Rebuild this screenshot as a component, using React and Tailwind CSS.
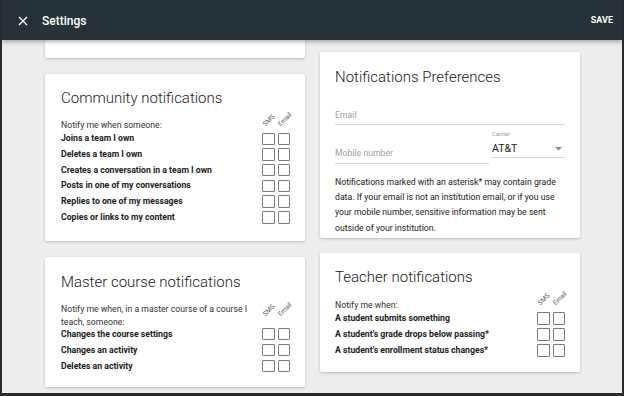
import React from "react";

function Box() {
  return <div className="w-[12.5px] h-[12.5px] border-[1.5px] border-[#7a7a7a] rounded-[1px] bg-white" />;
}

function Labels({ pb }) {
  return (
    <div className={`w-[28px] shrink-0 flex gap-[3px] self-stretch items-end ${pb}`}>
      <div className="w-[12.5px] h-0 relative">
        <span className="absolute left-[4.5px] bottom-0 origin-bottom-left -rotate-45 text-[6.5px] leading-[7px] whitespace-nowrap text-[#555]">SMS</span>
      </div>
      <div className="w-[12.5px] h-0 relative">
        <span className="absolute left-[4.5px] bottom-0 origin-bottom-left -rotate-45 text-[6.5px] leading-[7px] whitespace-nowrap text-[#555]">Email</span>
      </div>
    </div>
  );
}

function Row({ text, h = "h-[15.7px]" }) {
  return (
    <div className={`flex items-center justify-between ${h}`}>
      <span className="text-[8.7px] font-bold text-[#212121] whitespace-nowrap">{text}</span>
      <div className="w-[28px] flex gap-[3px]">
        <Box />
        <Box />
      </div>
    </div>
  );
}

function Card({ children, className = "" }) {
  return (
    <div className={`bg-white rounded-[2px] shadow-[0_1px_3px_rgba(0,0,0,0.22)] ${className}`}>{children}</div>
  );
}

export default function App() {
  return (
    <div className="w-[624px] h-[396px] bg-[#2b2b2b] pt-px pl-[2px] pr-[2px] pb-[3px] font-['Roboto',sans-serif]">
      <div className="w-full h-full bg-[#ededed] flex flex-col overflow-hidden">
        <header className="relative z-10 h-[39px] shrink-0 bg-[#263238] shadow-[0_2px_4px_rgba(0,0,0,0.3)] flex items-center">
          <div className="w-[40px] flex justify-center pl-[2px]">
            <svg width="10" height="10" viewBox="0 0 10 10" className="mt-[1px]">
              <path d="M1 1 L9 9 M9 1 L1 9" stroke="white" strokeWidth="1.3" fill="none" />
            </svg>
          </div>
          <span className="text-white text-[12px] font-medium">Settings</span>
          <span className="ml-auto mr-[9px] text-white text-[9px] font-bold">SAVE</span>
        </header>
        <div className="flex gap-[15px] pl-[43px]">
          <div className="w-[260px] flex flex-col gap-[16px]">
            <Card className="h-[18px]" />
            <Card className="pt-[14px] pl-[16px] pr-[15px] pb-[16px]">
              <h2 className="text-[15px] font-light leading-[20px] text-[#212121]">Community notifications</h2>
              <div className="mt-[11px] flex justify-between h-[12px]">
                <span className="text-[8.7px] leading-[12px] text-[#333]">Notify me when someone:</span>
                <Labels pb="pb-[3px]" />
              </div>
              <Row text="Joins a team I own" />
              <Row text="Deletes a team I own" />
              <Row text="Creates a conversation in a team I own" />
              <Row text="Posts in one of my conversations" />
              <Row text="Replies to one of my messages" />
              <Row text="Copies or links to my content" />
            </Card>
            <Card className="pt-[15px] pl-[16px] pr-[15px] pb-[13px]">
              <h2 className="text-[15px] font-light leading-[20px] text-[#212121]">Master course notifications</h2>
              <div className="mt-[11px] flex justify-between">
                <span className="text-[8.7px] leading-[12.5px] text-[#333]">
                  Notify me when, in a master course of a course I<br />teach, someone:
                </span>
                <Labels pb="pb-[10px]" />
              </div>
              <div className="-mt-[2px]">
                <Row text="Changes the course settings" h="h-[16px]" />
                <Row text="Changes an activity" h="h-[16px]" />
                <Row text="Deletes an activity" h="h-[16px]" />
              </div>
            </Card>
          </div>
          <div className="w-[260px] flex flex-col gap-[15px] pt-[12px]">
            <Card className="pt-[15px] pl-[15px] pr-[15px] pb-[1.6px]">
              <h2 className="text-[15px] font-light leading-[20px] text-[#212121]">Notifications Preferences</h2>
              <div className="mt-[22px] h-[16px] border-b border-[#d6d6d6] text-[8.7px] leading-[12px] text-[#9e9e9e]">Email</div>
              <div className="mt-[5px] flex gap-[3px] items-start">
                <div className="flex-1 h-[34px] border-b border-[#d6d6d6] pt-[17px] text-[8.7px] leading-[12px] text-[#9e9e9e]">Mobile number</div>
                <div className="w-[73px] h-[28px] border-b border-[#d6d6d6] flex flex-col">
                  <span className="text-[6px] leading-[8px] text-[#9e9e9e]">Carrier</span>
                  <div className="mt-[4px] flex items-center justify-between h-[14px]">
                    <span className="text-[10.5px] leading-[14px] text-[#212121]">AT&amp;T</span>
                    <svg width="7" height="4" viewBox="0 0 7 4" className="mr-[3px]">
                      <path d="M0 0 L7 0 L3.5 3.5 Z" fill="#8a8a8a" />
                    </svg>
                  </div>
                </div>
              </div>
              <p className="mt-[10.5px] text-[8.7px] leading-[15.4px] text-[#212121]">
                Notifications marked with an asterisk* may contain grade data. If your email is not an institution email, or if you use your mobile number, sensitive information may be sent outside of your institution.
              </p>
            </Card>
            <Card className="pt-[14px] pl-[15px] pr-[15px] pb-[13px]">
              <h2 className="text-[15px] font-light leading-[20px] text-[#212121]">Teacher notifications</h2>
              <div className="mt-[12px] flex justify-between h-[12px]">
                <span className="text-[8.7px] leading-[12px] text-[#333]">Notify me when:</span>
                <Labels pb="pb-[4px]" />
              </div>
              <Row text="A student submits something" h="h-[16px]" />
              <Row text="A student's grade drops below passing*" h="h-[16px]" />
              <Row text="A student's enrollment status changes*" h="h-[16px]" />
            </Card>
          </div>
        </div>
      </div>
    </div>
  );
}
